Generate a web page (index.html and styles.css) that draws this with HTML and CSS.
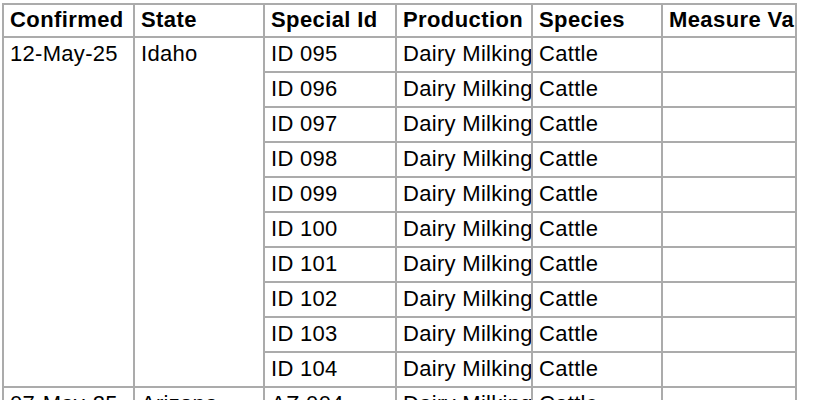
FILE: index.html
```html
<!DOCTYPE html>
<html>
<head>
<meta charset="utf-8">
<link rel="stylesheet" href="styles.css">
</head>
<body>
<div class="wrap">
<table class="grid">
<colgroup>
<col class="c1"><col class="c2"><col class="c3"><col class="c4"><col class="c5"><col class="c6">
</colgroup>
<thead>
<tr><th>Confirmed</th><th>State</th><th>Special Id</th><th>Production</th><th>Species</th><th>Measure Value</th></tr>
</thead>
<tbody>
<tr><td rowspan="10">12-May-25</td><td rowspan="10">Idaho</td><td>ID 095</td><td>Dairy Milking</td><td>Cattle</td><td></td></tr>
<tr><td>ID 096</td><td>Dairy Milking</td><td>Cattle</td><td></td></tr>
<tr><td>ID 097</td><td>Dairy Milking</td><td>Cattle</td><td></td></tr>
<tr><td>ID 098</td><td>Dairy Milking</td><td>Cattle</td><td></td></tr>
<tr><td>ID 099</td><td>Dairy Milking</td><td>Cattle</td><td></td></tr>
<tr><td>ID 100</td><td>Dairy Milking</td><td>Cattle</td><td></td></tr>
<tr><td>ID 101</td><td>Dairy Milking</td><td>Cattle</td><td></td></tr>
<tr><td>ID 102</td><td>Dairy Milking</td><td>Cattle</td><td></td></tr>
<tr><td>ID 103</td><td>Dairy Milking</td><td>Cattle</td><td></td></tr>
<tr><td>ID 104</td><td>Dairy Milking</td><td>Cattle</td><td></td></tr>
<tr><td>07-May-25</td><td>Arizona</td><td>AZ 004</td><td>Dairy Milking</td><td>Cattle</td><td></td></tr>
</tbody>
</table>
</div>
</body>
</html>
```

FILE: styles.css
```css
html, body {
  margin: 0;
  padding: 0;
  background: #fff;
}
body {
  font-family: "Liberation Sans", Arial, Helvetica, sans-serif;
  color: #000;
  overflow: hidden;
}
.wrap {
  padding: 3px 0 0 2px;
}
.grid {
  table-layout: fixed;
  border-collapse: separate;
  border-spacing: 0;
  width: 795px;
  border-left: 2px solid #ababab;
  border-top: 2px solid #ababab;
  font-size: 22px;
}
.c1 { width: 131px; }
.c2 { width: 130px; }
.c3 { width: 132px; }
.c4 { width: 136px; }
.c5 { width: 130px; }
.c6 { width: 134px; }
.grid th,
.grid td {
  border-right: 2px solid #ababab;
  border-bottom: 2px solid #ababab;
  padding: 0 0 0 6px;
  white-space: nowrap;
  overflow: hidden;
  text-align: left;
  vertical-align: top;
  line-height: 25px;
}
.grid th {
  height: 29px;
  padding-top: 2px;
  font-weight: bold;
  letter-spacing: 0.4px;
}
.grid td {
  height: 30px;
  padding-top: 3px;
  letter-spacing: 0.3px;
}
```
